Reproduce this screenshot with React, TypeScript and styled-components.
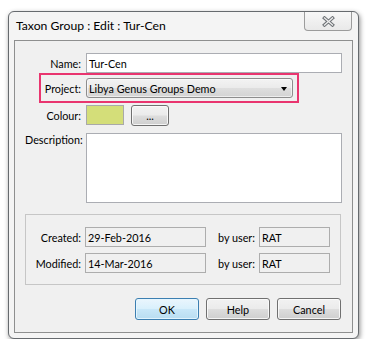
import React from "react";
import styled, { createGlobalStyle } from "styled-components";

const GlobalStyle = createGlobalStyle`
  html, body { margin: 0; padding: 0; background: #ffffff; }
  body { font-family: Lato, "Open Sans", sans-serif; font-size: 10.8px; color: #000; }
  * { box-sizing: border-box; }
`;

const Page = styled.div`
  padding: 11px 0 0 8px;
`;

const Window = styled.div`
  width: 351px;
  height: 328px;
  border: 1px solid #666a6e;
  border-radius: 6px;
  background: #f4f4f4;
  box-shadow: 1px 2px 5px rgba(0, 0, 0, 0.45);
  display: flex;
  flex-direction: column;
  padding: 0 5px 5px 5px;
`;

const TitleBar = styled.div`
  height: 28px;
  display: flex;
  align-items: flex-start;
  justify-content: space-between;
`;

const Title = styled.div`
  font-size: 12.2px;
  line-height: 15px;
  padding: 6px 0 0 2px;
  white-space: nowrap;
`;

const CloseButton = styled.div`
  width: 48px;
  height: 19px;
  margin-right: 1px;
  border: 1px solid #9c9c9c;
  border-top: none;
  border-radius: 0 0 4px 4px;
  background: linear-gradient(#f7f7f7, #e9e9e9);
  display: flex;
  align-items: center;
  justify-content: center;
  padding-top: 1px;
`;

const Client = styled.div`
  flex: 1;
  border: 1px solid #8e8f8f;
  background: #f0f0f0;
  padding: 12px 10px 0 10px;
  display: flex;
  flex-direction: column;
`;

const Row = styled.div<{ $mt: number; $align?: string }>`
  position: relative;
  display: flex;
  align-items: ${(p) => p.$align || "center"};
  gap: 5px;
  margin-top: ${(p) => p.$mt}px;
`;

const Label = styled.div`
  width: 56px;
  flex-shrink: 0;
  text-align: right;
  white-space: nowrap;
  line-height: 13px;
`;

const TextInput = styled.div`
  flex: 1;
  height: 20px;
  border: 1px solid #abadb3;
  background: #ffffff;
  padding-left: 2px;
  display: flex;
  align-items: center;
  white-space: nowrap;
`;

const TextArea = styled.div`
  flex: 1;
  height: 70px;
  border: 1px solid #abadb3;
  background: #ffffff;
`;

const Combo = styled.div`
  width: 207px;
  height: 20px;
  border: 1px solid #8d8d8d;
  border-radius: 3px;
  background: linear-gradient(#f3f3f3 0%, #ebebeb 48%, #dedede 52%, #d3d3d3 100%);
  box-shadow: inset 0 0 0 1px rgba(255, 255, 255, 0.6);
  display: flex;
  align-items: center;
  justify-content: space-between;
  padding: 0 5px 0 2px;
  white-space: nowrap;
`;

const Arrow = styled.span`
  width: 0;
  height: 0;
  border-left: 3.5px solid transparent;
  border-right: 3.5px solid transparent;
  border-top: 4px solid #000;
  margin-top: 1px;
`;

const Highlight = styled.div`
  position: absolute;
  left: 14px;
  top: -5px;
  width: 260px;
  height: 30px;
  border: 2px solid #e9356f;
  pointer-events: none;
`;

const ColourFields = styled.div`
  display: flex;
  align-items: flex-start;
  gap: 7px;
`;

const Swatch = styled.div<{ $color: string }>`
  width: 38px;
  height: 20px;
  border: 1px solid #a9a9a9;
  background: ${(p) => p.$color};
`;

const Button = styled.div<{ $w: number; $h: number; $default?: boolean }>`
  width: ${(p) => p.$w}px;
  height: ${(p) => p.$h}px;
  border: 1px solid ${(p) => (p.$default ? "#3c7fb1" : "#707070")};
  border-radius: 3px;
  background: ${(p) =>
    p.$default
      ? "linear-gradient(#eaf6fd 0%, #d9f0fc 48%, #c8e7f8 52%, #b9ddf1 100%)"
      : "linear-gradient(#f2f2f2 0%, #ebebeb 48%, #dddddd 52%, #cfcfcf 100%)"};
  box-shadow: inset 0 0 0 1px ${(p) => (p.$default ? "rgba(230,246,255,0.9)" : "rgba(252,252,252,0.85)")};
  display: flex;
  align-items: center;
  justify-content: center;
  white-space: nowrap;
  line-height: 13px;
`;

const GroupBox = styled.div`
  margin-top: 11px;
  margin-right: 1px;
  height: 71px;
  border: 1px solid #c6c6c6;
  padding-top: 12px;
  display: grid;
  grid-template-columns: 59px 121px 53px 71px;
  grid-auto-rows: 20px;
  row-gap: 6px;
  align-content: start;
`;

const GroupLabel = styled.div`
  text-align: right;
  padding-right: 4px;
  white-space: nowrap;
  align-self: center;
  line-height: 13px;
`;

const ReadOnly = styled.div`
  height: 20px;
  border: 1px solid #adadad;
  background: #f0f0f0;
  padding-left: 2px;
  display: flex;
  align-items: center;
  white-space: nowrap;
`;

const ButtonBar = styled.div`
  margin-top: 13px;
  margin-right: 1px;
  display: flex;
  justify-content: flex-end;
  gap: 7px;
`;

const CloseGlyph = () => (
  <svg width="13" height="11" viewBox="0 0 13 11">
    <path d="M2.5 2 L10.5 9 M10.5 2 L2.5 9" stroke="#6f7377" strokeWidth="3.4" strokeLinecap="square" fill="none" />
    <path d="M2.5 2 L10.5 9 M10.5 2 L2.5 9" stroke="#eeeeee" strokeWidth="1.3" strokeLinecap="square" fill="none" />
  </svg>
);

export default function App() {
  return (
    <>
      <GlobalStyle />
      <Page>
        <Window>
          <TitleBar>
            <Title>Taxon Group : Edit : Tur-Cen</Title>
            <CloseButton>
              <CloseGlyph />
            </CloseButton>
          </TitleBar>
          <Client>
            <Row $mt={0}>
              <Label>Name:</Label>
              <TextInput>Tur-Cen</TextInput>
            </Row>
            <Row $mt={5}>
              <Highlight />
              <Label>Project:</Label>
              <Combo>
                <span>Libya Genus Groups Demo</span>
                <Arrow />
              </Combo>
            </Row>
            <Row $mt={7} $align="flex-start">
              <Label style={{ marginTop: 4 }}>Colour:</Label>
              <ColourFields>
                <Swatch $color="#d4de79" />
                <Button $w={38} $h={21}>...</Button>
              </ColourFields>
            </Row>
            <Row $mt={7} $align="flex-start">
              <Label>Description:</Label>
              <TextArea />
            </Row>
            <GroupBox>
              <GroupLabel>Created:</GroupLabel>
              <ReadOnly>29-Feb-2016</ReadOnly>
              <GroupLabel>by user:</GroupLabel>
              <ReadOnly>RAT</ReadOnly>
              <GroupLabel>Modified:</GroupLabel>
              <ReadOnly>14-Mar-2016</ReadOnly>
              <GroupLabel>by user:</GroupLabel>
              <ReadOnly>RAT</ReadOnly>
            </GroupBox>
            <ButtonBar>
              <Button $w={64} $h={22} $default>OK</Button>
              <Button $w={64} $h={22}>Help</Button>
              <Button $w={64} $h={22}>Cancel</Button>
            </ButtonBar>
          </Client>
        </Window>
      </Page>
    </>
  );
}
